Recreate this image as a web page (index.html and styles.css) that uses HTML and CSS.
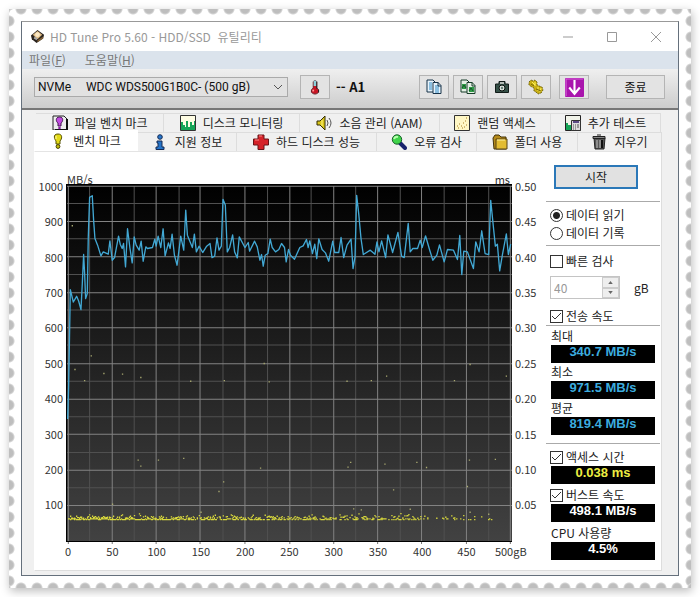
FILE: index.html
```
<!DOCTYPE html>
<html lang="ko">
<head>
<meta charset="utf-8">
<title>HD Tune Pro 5.60 - HDD/SSD 유틸리티</title>
<link rel="stylesheet" href="styles.css">
</head>
<body>
<div class="stamp">
<main class="window">
  <header class="titlebar">
    <svg class="app-icon" viewBox="0 0 16 16"><path d="M1 7 8 1l7 5-1 4-7 5-5-4z" fill="#29231e"/><path d="M3 6 8 2l5 4-5 5z" fill="#e0bd86"/><circle cx="8" cy="6" r="2.5" fill="#fae8c5"/><path d="m4 10 3 2 1-2-3-2z" fill="#aaa"/><path d="m8 14 6-4V8l-6 4z" fill="#816137"/></svg>
    <h1>HD Tune Pro 5.60 - HDD/SSD&nbsp; 유틸리티</h1>
    <div class="win-buttons">
      <button aria-label="최소화"><svg viewBox="0 0 12 12"><path d="M1 6h10"/></svg></button>
      <button aria-label="최대화"><svg viewBox="0 0 12 12"><path d="M1.5 1.5h9v9h-9z"/></svg></button>
      <button aria-label="닫기"><svg viewBox="0 0 12 12"><path d="m1 1 10 10M11 1 1 11"/></svg></button>
    </div>
  </header>
  <nav class="menu"><a href="#file">파일(<u>F</u>)</a><a href="#help">도움말(<u>H</u>)</a></nav>
  <div class="toolbar">
    <select class="drive" aria-label="드라이브"><option>NVMe &nbsp; &nbsp; WDC WDS500G1B0C- (500 gB)</option></select>
    <button class="tool" aria-label="온도"><svg viewBox="0 0 16 18"><path d="M6 3q2-3 4 0v7q3 2 2 5-4 4-8 0-1-3 2-5z" fill="#c91524" stroke="#5d1820"/><path d="M6.500 2.500q1.500-2 3 0V8h-3z" fill="#8bd2dc"/><path d="M6 12v2" stroke="#ff9c9c" stroke-width="2"/><path d="M10 3v8M12 12v3" stroke="#222"/></svg></button>
    <span class="temp">-- A1</span>
    <button class="tool first" aria-label="텍스트 복사"><svg viewBox="0 0 16 16"><path d="M1 1h6l2 2v10H1z" fill="#e8f4fc" stroke="#163248"/><path d="M7 3.500h5l3 3v8H7z" fill="#e8f4fc" stroke="#163248"/><path d="M3 4h3M3 6h3M3 8h3M3 10h3M9 7h4M9 9h4M9 11h4M9 13h4" stroke="#308bc5"/><path d="M12 3v4h3" fill="none" stroke="#163248"/></svg></button>
    <button class="tool" aria-label="그림 복사"><svg viewBox="0 0 16 16"><path d="M1 1h6l2 2v10H1z" fill="#e5f0e6" stroke="#173d29"/><path d="M7 3.500h5l3 3v8H7z" fill="#e5f0e6" stroke="#173d29"/><path d="M2 5h4v5H2zM9 8h5v5H9z" fill="#2d9c45"/><path d="m2 9 2-3 2 3M9 12l2-3 2 3" fill="none" stroke="#155329"/><path d="M12 3v4h3" fill="none" stroke="#173d29"/></svg></button>
    <button class="tool" aria-label="화면 저장"><svg viewBox="0 0 16 16"><path d="M1.500 5H5V2.500h6V5h3.500v8.500h-13z" fill="#355047" stroke="#111b18"/><path d="M6 3h4v2H6z" fill="#b5bdb9"/><circle cx="8" cy="9" r="3" fill="#dce5df" stroke="#09100d"/><circle cx="8" cy="9" r="1.200" fill="#678177"/></svg></button>
    <button class="tool" aria-label="설정"><svg viewBox="0 0 16 16"><path d="M1 3 3 1l2 1 2-1 2 2v3l2 1 3 1 1 3-2 3-3 1-2-2-2-1V9L4 8 1 6z" fill="#c7ae15" stroke="#756711" stroke-dasharray="2 1"/><path d="m4 3 3 3m0-3v4m3 1v4m3-3-1 4" stroke="#fff35a"/><path d="m3 5 3 2m2 3 5 2" stroke="#796805"/></svg></button>
    <button class="tool download" aria-label="최소화 저장"><svg viewBox="0 0 18 18"><rect width="18" height="18" rx="1" fill="#a915ad"/><path d="M1 17V1h16" fill="none" stroke="#d763d8"/><path d="M9 2v12M4 9l5 6 5-6" fill="none" stroke="#fff" stroke-width="2"/></svg></button>
    <button class="exit">종료</button>
  </div>
  <div class="content">
    <div class="tabs back" role="tablist">
      <button><svg viewBox="0 0 16 16"><path d="M1 1h11l3 3v11H1z" fill="#eee" stroke="#222"/><path d="M15 4v11H3" fill="none" stroke="#111" stroke-width="2"/><path d="M7.500 2C3 2 4 7 6 8v3h3V8c2-1 3-6-1.500-6z" fill="#c14be0" stroke="#431950"/><circle cx="7.500" cy="13" r="1.300" fill="#8a20a3"/></svg>파일 벤치 마크</button>
      <button><svg viewBox="0 0 16 16"><path d="M.5.5h15v15H.500z" fill="#fffde4" stroke="#333"/><path d="M1 15V7h2v3h2v2h1V6h2v6h2V7h2v3h2V6h1v9z" fill="#16a457"/></svg>디스크 모니터링</button>
      <button><svg viewBox="0 0 16 16"><path d="M1 6h3l5-5v14l-5-5H1z" fill="#d9c51a" stroke="#332d05"/><path d="M6 5v6" stroke="#fff58a"/><path d="M11 5q2 3 0 6m2-8q4 5 0 10" fill="none" stroke="#555"/></svg>소음 관리 (AAM)</button>
      <button><svg viewBox="0 0 16 16"><path d="M.5.500h15v15H.500z" fill="#fff7c5" stroke="#333"/><path d="M3 11h1M5 9h1M7 11h1M9 8h1M11 6h1M12 10h1M4 13h1M8 13h1M12 3h1M10 12h1" stroke="#a67c20"/></svg>랜덤 액세스</button>
      <button><svg viewBox="0 0 16 16"><path d="M.5.500h15v15H.500z" fill="#f1f3e9" stroke="#222"/><path d="M1 8h2v2h3v5H1z" fill="#16a457"/><path d="M6.500 5.500h9v10h-9z" fill="#ddd" stroke="#333"/><path d="M8 7h6" stroke="#5b4a84" stroke-width="2"/><path d="M8 10h1m1 0h1m1 0h2M8 12h1m1 0h1m1 0h2M8 14h1m1 0h1" stroke="#555"/></svg>추가 테스트</button>
    </div>
    <div class="tabs front" role="tablist">
      <button class="active"><svg viewBox="0 0 16 16"><path d="M8 1C2 1 5 7 6 8v3h4V8c2-2 3-7-2-7z" fill="#e3da17" stroke="#555000"/><path d="M6 3v3" stroke="#fff9a1"/><circle cx="8" cy="13.500" r="1.900" fill="#c4bd0c" stroke="#444000"/></svg>벤치 마크</button>
      <button><svg viewBox="0 0 16 16"><circle cx="8" cy="3" r="2.300" fill="#2878cc" stroke="#142a55"/><path d="M5 7h5v6h2v2.500H4V13h2V9H5z" fill="#2474c9" stroke="#142a55"/></svg>지원 정보</button>
      <button><svg viewBox="0 0 16 16"><path d="M5 1h6v4h4.500v6H11v4.500H5V11H.500V5H5z" fill="#d52229" stroke="#681316"/><path d="M6 2h3M2 6h4" stroke="#ff8585"/></svg>하드 디스크 성능</button>
      <button><svg viewBox="0 0 16 16"><path d="m9 9 5 5" stroke="#17216c" stroke-width="4" stroke-linecap="round"/><circle cx="6" cy="5.500" r="4.700" fill="#40d34a" stroke="#155d28"/><path d="M3 5q1-3 4-2" fill="none" stroke="#b8ffae" stroke-width="2"/></svg>오류 검사</button>
      <button><svg viewBox="0 0 16 16"><path d="M1 4 3 1h4l2 2h5v12H2z" fill="#b58a19" stroke="#43330b"/><path d="M4 5h11v10H4z" fill="#e3bc32" stroke="#574312"/><path d="M5 6h8" stroke="#fff3a0"/></svg>폴더 사용</button>
      <button><svg viewBox="0 0 16 16"><path d="M3 4h11l-1 11H4z" fill="#555" stroke="#222"/><path d="M2 2.500h12v2H2zM6 1h4" fill="#888" stroke="#222"/><path d="M6 6v8m3-8v8" stroke="#c5c5c5"/><path d="M11 6v8" stroke="#111" stroke-width="2"/></svg>지우기</button>
    </div>
    <div class="page">
      <section class="chart">
        <div class="y-axis speed"><span>1000</span><span>900</span><span>800</span><span>700</span><span>600</span><span>500</span><span>400</span><span>300</span><span>200</span><span>100</span></div>
        <div class="plot-column">
          <div class="units"><span>MB/s</span><span>ms</span></div>
          <svg class="plot" viewBox="0 0 1341 1071" preserveAspectRatio="none">
            <defs><linearGradient id="bg" x2="0" y2="1"><stop stop-color="#000"/><stop offset="1" stop-color="#424242"/></linearGradient></defs>
            <rect width="1341" height="1071" fill="url(#bg)"/>
            <path class="minor" d="M71 6V1068M205 6V1068M340 6V1068M472 6V1068M606 6V1068M737 6V1068M871 6V1068M1005 6V1068M1137 6V1068M1271 6V1068M0 58H1341M0 164H1341M0 271H1341M0 377H1341M0 482H1341M0 590H1341M0 696H1341M0 803H1341M0 909H1341"/>
            <path class="major" d="M7 6V1068M139 6V1068M271 6V1068M403 6V1068M538 6V1068M673 6V1068M805 6V1068M937 6V1068M1069 6V1068M1204 6V1068M1336 6V1068M0 7H1341M0 112H1341M0 218H1341M0 325H1341M0 430H1341M0 538H1341M0 644H1341M0 749H1341M0 856H1341M0 962H1341"/>
            <path class="frame" d="M2 0V1069H1341"/>
            <path class="ticks" d="M7 1071v6M139 1071v6M271 1071v6M403 1071v6M538 1071v6M673 1071v6M805 1071v6M937 1071v6M1069 1071v6M1204 1071v6M1336 1071v6"/>
            <polyline class="speed-line" points="5,703 8,603 10,488 13,316 22,353 32,336 38,350 45,376 49,298 53,211 56,268 59,343 64,328 67,158 71,40 79,35 83,108 87,163 95,183 105,215 112,203 127,210 132,170 139,228 146,220 158,156 163,180 169,193 173,178 179,248 185,134 192,190 199,236 205,158 211,183 220,198 226,171 232,231 240,188 245,193 260,190 267,165 271,186 277,156 285,190 292,134 298,215 308,176 313,193 319,150 326,213 334,243 345,156 354,198 360,78 365,153 380,190 386,150 392,203 400,186 411,205 423,186 433,178 439,220 447,216 454,161 460,198 467,186 472,46 479,63 485,203 492,190 501,152 507,203 515,221 521,158 538,190 548,175 552,201 567,171 575,188 583,228 588,211 593,246 599,213 607,208 614,165 620,190 630,203 640,196 648,178 657,190 662,233 669,196 675,213 687,225 703,190 713,185 723,166 728,190 733,170 741,208 748,180 754,223 760,164 770,196 780,206 790,231 802,171 808,205 820,205 827,160 835,220 845,183 857,165 863,253 869,218 874,34 880,88 887,163 894,211 915,198 929,210 935,173 941,203 949,170 961,220 968,152 982,205 998,145 1009,216 1017,220 1029,118 1035,203 1043,193 1057,193 1065,168 1071,190 1081,155 1093,196 1103,228 1115,213 1123,182 1137,233 1147,196 1165,198 1177,226 1184,154 1190,271 1196,201 1207,203 1225,253 1232,173 1242,203 1250,140 1260,208 1271,211 1277,49 1285,128 1291,186 1297,180 1304,260 1312,213 1324,149 1330,211 1337,180"/>
            <path id="outliers" class="outliers"/>
            <path id="band" class="band"/>
          </svg>
          <div class="x-axis"><span>0</span><span>50</span><span>100</span><span>150</span><span>200</span><span>250</span><span>300</span><span>350</span><span>400</span><span>450</span><span>500gB</span></div>
        </div>
        <div class="y-axis time"><span>0.50</span><span>0.45</span><span>0.40</span><span>0.35</span><span>0.30</span><span>0.25</span><span>0.20</span><span>0.15</span><span>0.10</span><span>0.05</span></div>
      </section>
      <aside class="side">
        <div class="group run"><button class="start">시작</button></div>
        <div class="group mode">
          <label><input type="radio" name="mode" checked>데이터 읽기</label>
          <label><input type="radio" name="mode">데이터 기록</label>
        </div>
        <div class="group options">
          <label><input type="checkbox">빠른 검사</label>
          <div class="size"><span class="spin"><input type="number" id="length" value="40" disabled><span class="arrows"><button disabled aria-label="증가"><svg viewBox="0 0 6 4"><path d="M0 4 3 0l3 4z"/></svg></button><button disabled aria-label="감소"><svg viewBox="0 0 6 4"><path d="m0 0 3 4 3-4z"/></svg></button></span></span><label for="length">gB</label></div>
          <label><input type="checkbox" checked>전송 속도</label>
        </div>
        <div class="group rates">
          <span class="caption">최대</span><output>340.7 MB/s</output>
          <span class="caption">최소</span><output>971.5 MB/s</output>
          <span class="caption">평균</span><output>819.4 MB/s</output>
        </div>
        <div class="group extra">
          <label><input type="checkbox" checked>액세스 시간</label><output class="yellow">0.038 ms</output>
          <label><input type="checkbox" checked>버스트 속도</label><output class="white">498.1 MB/s</output>
          <span class="caption">CPU 사용량</span><output class="white">4.5%</output>
        </div>
      </aside>
    </div>
  </div>
</main>
</div>
<script src="chart.js"></script>
</body>
</html>
```

FILE: styles.css
```
* { box-sizing: border-box; }
body {
  margin: 0;
  overflow-x: hidden;
  background: #fff;
  color: #222;
  font: 12px/18px "Noto Sans CJK KR", sans-serif;
}
button, input, select { font: inherit; color: inherit; margin: 0; padding: 0; border-radius: 0; }
a { color: inherit; text-decoration: none; }
svg { display: block; flex: none; }

.stamp {
  --hole: #bebebe 0 4px, #d4d4d4 5px, transparent 6px;
  margin: 9px;
  padding: 12px;
  box-shadow: 1px 3px 9px #bbb;
  background:
    radial-gradient(circle at 8px 0, var(--hole)) 4px 0 / 16px 6px repeat-x,
    radial-gradient(circle at 8px 6px, var(--hole)) 4px 100% / 16px 6px repeat-x,
    radial-gradient(circle at 0 8px, var(--hole)) 0 4px / 6px 16px repeat-y,
    radial-gradient(circle at 6px 8px, var(--hole)) 100% 4px / 6px 16px repeat-y,
    #fff;
}
.window { border: 1px solid #65707c; border-top-color: #999; background: #f0f0f0; }

.titlebar { display: flex; align-items: center; height: 29px; padding-left: 8px; background: #fff; color: #999; }
.app-icon { width: 15px; height: 15px; }
h1 { flex: 1; margin: 0 0 0 5px; font-size: 12px; font-weight: 400; white-space: nowrap; }
.win-buttons { display: flex; }
.win-buttons button { display: grid; place-items: center; width: 44px; height: 28px; border: 0; background: none; }
.win-buttons svg { width: 12px; height: 12px; fill: none; stroke: #999; }

.menu { display: flex; gap: 19px; height: 18px; padding-left: 7px; background: #dbe3ec; color: #777; }

.toolbar {
  display: flex;
  align-items: center;
  gap: 4px;
  height: 41px;
  padding: 0 13px 3px 12px;
  border-bottom: 2px solid #777;
  background: linear-gradient(#efefef, #cdcdcd);
}
.drive {
  flex: 0 1 254px;
  min-width: 0;
  height: 20px;
  margin-right: 8px;
  padding: 0 20px 0 3px;
  border: 1px solid #aaa;
  appearance: none;
  color: #111;
  font: 12px/18px Roboto, sans-serif;
  background: url("data:image/svg+xml,%3Csvg xmlns='http://www.w3.org/2000/svg' width='8' height='5'%3E%3Cpath d='m0 0 4 4 4-4' fill='none' stroke='%23555'/%3E%3C/svg%3E") right 5px center no-repeat #e2e2e2;
}
.tool, .exit { flex: none; height: 24px; border: 1px solid #b4b4b4; background: #e3e3e3; }
.tool { display: grid; place-items: center; width: 30px; }
.tool svg { width: 16px; height: 16px; }
.tool.download { margin-left: 4px; }
.tool.download svg { width: 19px; height: 19px; }
.tool.first { margin-left: auto; }
.temp { margin-left: 2px; color: #111; font-size: 13px; font-weight: 700; white-space: nowrap; }
.exit { width: 59px; margin-left: 13px; color: #111; }

.content { padding: 3px 16px 4px 12px; }
.tabs { display: grid; }
.tabs button {
  display: flex;
  align-items: center;
  justify-content: center;
  gap: 7px;
  height: 19px;
  border: 1px solid #ddd;
  border-width: 1px 1px 0 0;
  background: #f0f0f0;
  white-space: nowrap;
}
.tabs svg { width: 16px; height: 16px; }
.back { grid-template-columns: 128fr 136fr 140fr 111fr 110fr; margin: 0 1px 0 2px; }
.front { grid-template-columns: 104fr 99fr 140fr 100fr 101fr 84fr; }
.tabs .active { height: 21px; margin-top: -2px; border-color: #fff; background: #fff; }

.page { display: flex; border: 1px solid #ddd; border-left-color: #fff; border-top-color: #e4e4e4; background: #fff; }
.chart { display: flex; flex: 1; min-width: 0; color: #333; font-size: 11px; }
.y-axis { display: flex; flex-direction: column; padding: 16px 3px 48px; }
.y-axis span { display: flex; flex: 1; align-items: center; }
.speed { width: 31px; }
.speed span { justify-content: flex-end; }
.time { width: 34px; }
.plot-column { display: flex; flex: 1; flex-direction: column; min-width: 0; padding-top: 19px; }
.units { display: flex; justify-content: space-between; height: 13px; padding: 0 2px 0 1px; line-height: 16px; }
.plot { flex: 1; width: 100%; height: 0; min-height: 0; overflow: visible; }
.x-axis { display: flex; height: 28px; margin: 0 -21px 0 -20px; }
.x-axis span { flex: 1 1 0; min-width: 0; text-align: center; }

.minor, .major, .frame, .ticks { fill: none; stroke-width: 3; shape-rendering: crispEdges; }
.minor { stroke: #505050; }
.major { stroke: #828282; }
.frame { stroke: #000; stroke-width: 4; }
.ticks { stroke: #777; }
.speed-line { fill: none; stroke: #42a8d4; stroke-width: 4; stroke-linejoin: round; }
.outliers { fill: #a8a870; }
.band { fill: #d9d93c; }

.side { flex: none; width: 115px; padding: 13px 1px 10px 0; }
.group + .group { border-top: 1px solid #aaa; }
.run { padding: 0 0 12px 8px; }
.start { display: block; width: 84px; height: 24px; border: 2px solid #2b78b8; background: #e1e1e1; }
.side label { display: flex; align-items: center; gap: 3px; height: 18px; white-space: nowrap; }
.mode, .options { padding-left: 4px; }
.mode { padding-top: 4px; padding-bottom: 3px; }
.options { padding-top: 6px; }
.rates { padding: 1px 5px 8px 5px; }
.extra { padding: 4px 5px 0 5px; }
.extra label { margin-left: -1px; }
.side input[type="radio"], .side input[type="checkbox"] {
  flex: none;
  width: 13px;
  height: 13px;
  border: 1px solid #333;
  appearance: none;
  background: #fff;
}
.side input[type="radio"] { border-radius: 50%; }
.side input[type="radio"]:checked { background: radial-gradient(circle, #222 0 3px, transparent 4px); }
.side input[type="checkbox"]:checked { background: url("data:image/svg+xml,%3Csvg xmlns='http://www.w3.org/2000/svg' width='11' height='11'%3E%3Cpath d='m1 5 3 3 6-6' fill='none' stroke='%23333'/%3E%3C/svg%3E"); }
.size { display: flex; align-items: center; gap: 14px; margin: 6px 0 8px; }
.spin { display: flex; width: 70px; height: 23px; border: 1px solid #c4c4c4; }
.spin input { flex: 1; min-width: 0; padding-left: 3px; border: 0; appearance: textfield; background: #fff; color: #999; }
.spin input::-webkit-inner-spin-button { appearance: none; }
.arrows { display: grid; width: 17px; }
.arrows button { display: grid; place-items: center; border: 1px solid #ccc; background: #eee; }
.arrows svg { width: 5px; height: 3px; fill: #666; }
.caption { display: block; height: 18px; }
output {
  display: block;
  height: 18px;
  overflow: hidden;
  background: #000;
  color: #3cacdf;
  font: 700 13px/14px "Liberation Sans", sans-serif;
  text-align: center;
}
.yellow { color: #eeee42; }
.white { color: #fff; }
.extra output + label, .extra output + .caption { margin-top: 2px; }
```

FILE: chart.js
```
// Access-time samples, in plot units (3 units per pixel at the default size).
const outliers = [
  [19,125],[27,555],[56,588],[76,514],[114,567],[170,569],[225,579],[375,590],[476,588],[596,537],[611,592],
  [217,826],[225,844],[278,826],[354,821],[585,850],[474,891],[460,920],[140,958],[406,982],
  [845,590],[918,588],[964,575],[1168,588],[1215,540],[1324,575],[848,847],[856,833],[959,838],[985,915],
  [1055,833],[1084,848],[1207,905],[1213,826],[1291,824],[865,972],[888,975],[1035,973],[1215,982],[1271,988]
];
const dot = (x, y) => `M${x - 2} ${y - 2}h4v4h-4z`;
document.getElementById('outliers').setAttribute('d', outliers.map(p => dot(p[0], p[1])).join(''));

let seed = 17;
const random = () => (seed = (seed * 16807) % 2147483647) / 2147483647;
let path = '';
for (let x = 8; x < 1290; x += 3) {
  const density = x < 360 ? 1 : x < 740 ? 0.8 : x < 1060 ? 0.6 : 0.25;
  if (random() < density) path += dot(x, 1002 + Math.round(random()) * 2);
  if (random() < density * 0.7) path += dot(x, 1000 - Math.round(random() * random() * 14));
}
document.getElementById('band').setAttribute('d', path);
```
